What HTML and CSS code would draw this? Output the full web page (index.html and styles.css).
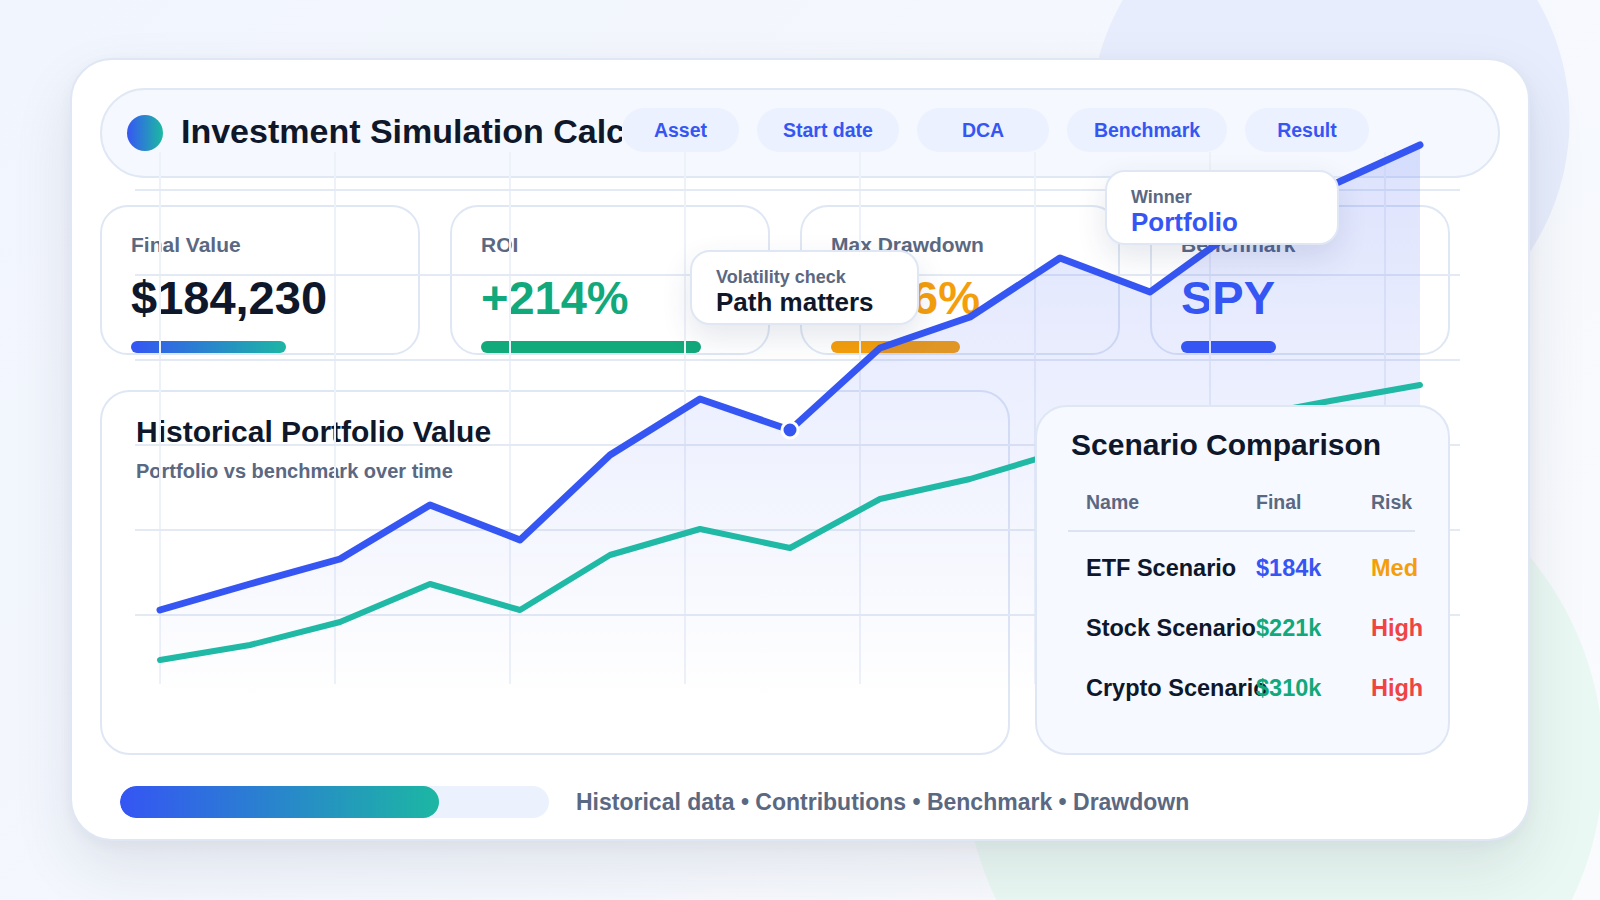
FILE: index.html
```html
<!DOCTYPE html>
<html lang="en">
<head>
<meta charset="utf-8">
<title>Investment Simulation Calculator</title>
<link rel="stylesheet" href="styles.css">
</head>
<body>
<main class="app">
  <header class="topbar">
    <span class="logo"></span>
    <h1 class="brand">Investment Simulation Calculator</h1>
    <nav class="steps">
      <span class="step">Asset</span>
      <span class="step">Start date</span>
      <span class="step">DCA</span>
      <span class="step">Benchmark</span>
      <span class="step">Result</span>
    </nav>
  </header>

  <section class="stats">
    <article class="stat">
      <div class="stat-label">Final Value</div>
      <div class="stat-value">$184,230</div>
      <div class="stat-bar bar-gradient" style="width:155px"></div>
    </article>
    <article class="stat">
      <div class="stat-label">ROI</div>
      <div class="stat-value tone-green">+214%</div>
      <div class="stat-bar bar-green" style="width:220px"></div>
    </article>
    <article class="stat">
      <div class="stat-label">Max Drawdown</div>
      <div class="stat-value tone-orange">-18.6%</div>
      <div class="stat-bar bar-orange" style="width:129px"></div>
    </article>
    <article class="stat">
      <div class="stat-label">Benchmark</div>
      <div class="stat-value tone-blue">SPY</div>
      <div class="stat-bar bar-blue" style="width:95px"></div>
    </article>
  </section>

  <section class="panels">
    <div class="panel chart-panel">
      <h2 class="panel-title">Historical Portfolio Value</h2>
      <p class="panel-sub">Portfolio vs benchmark over time</p>
    </div>
    <div class="panel scenario-panel">
      <h2 class="panel-title">Scenario Comparison</h2>
      <div class="table">
        <div class="trow thead">
          <span>Name</span><span>Final</span><span>Risk</span>
        </div>
        <div class="trow">
          <span class="name">ETF Scenario</span><span class="tone-blue">$184k</span><span class="tone-orange">Med</span>
        </div>
        <div class="trow">
          <span class="name">Stock Scenario</span><span class="tone-green">$221k</span><span class="tone-red">High</span>
        </div>
        <div class="trow">
          <span class="name">Crypto Scenario</span><span class="tone-green">$310k</span><span class="tone-red">High</span>
        </div>
      </div>
    </div>
  </section>

  <footer class="footer">
    <div class="progress"><div class="progress-fill" style="width:74.4%"></div></div>
    <span class="legend">Historical data • Contributions • Benchmark • Drawdown</span>
  </footer>

  <!-- value chart drawn across the whole dashboard, in page coordinates -->
  <svg class="plot" viewBox="70 58 1460 783" width="1460" height="783" aria-hidden="true">
    <defs>
      <linearGradient id="areaFade" x1="0" y1="145" x2="0" y2="700" gradientUnits="userSpaceOnUse">
        <stop offset="0" stop-color="#3656f4" stop-opacity="0.17"/>
        <stop offset="1" stop-color="#3656f4" stop-opacity="0"/>
      </linearGradient>
    </defs>
    <g class="grid-v">
      <line x1="160" y1="152" x2="160" y2="684"/>
      <line x1="335" y1="152" x2="335" y2="684"/>
      <line x1="510" y1="152" x2="510" y2="684"/>
      <line x1="685" y1="152" x2="685" y2="684"/>
      <line x1="860" y1="152" x2="860" y2="684"/>
      <line x1="1035" y1="152" x2="1035" y2="684"/>
      <line x1="1210" y1="152" x2="1210" y2="684"/>
      <line x1="1385" y1="152" x2="1385" y2="684"/>
    </g>
    <g class="grid-h">
      <line x1="135" y1="190" x2="1460" y2="190"/>
      <line x1="135" y1="275" x2="1460" y2="275"/>
      <line x1="135" y1="360" x2="1460" y2="360"/>
      <line x1="135" y1="445" x2="1460" y2="445"/>
      <line x1="135" y1="530" x2="1460" y2="530"/>
      <line x1="135" y1="615" x2="1460" y2="615"/>
    </g>
    <polygon fill="url(#areaFade)" points="160,610 250,584 340,559 430,505 520,540 610,455 700,399 790,430 880,348 970,317 1060,258 1150,292 1240,227 1330,186 1420,145 1420,700 160,700"/>
    <polyline class="line-bench" points="160,660 250,645 340,622 430,584 520,610 610,555 700,529 790,548 880,499 970,479 1060,452 1150,432 1240,418 1330,401 1420,385"/>
    <polyline class="line-port" points="160,610 250,584 340,559 430,505 520,540 610,455 700,399 790,430 880,348 970,317 1060,258 1150,292 1240,227 1330,186 1420,145"/>
    <circle class="marker" cx="790" cy="430" r="8"/>
  </svg>

  <div class="callout callout-volatility">
    <div class="callout-label">Volatility check</div>
    <div class="callout-value">Path matters</div>
  </div>
  <div class="callout callout-winner">
    <div class="callout-label">Winner</div>
    <div class="callout-value tone-blue">Portfolio</div>
  </div>
</main>
</body>
</html>
```

FILE: styles.css
```css
* {
  box-sizing: border-box;
}

html,
body {
  margin: 0;
  height: 100%;
}

body {
  overflow: hidden;
  font-family: "Liberation Sans", Arial, sans-serif;
  color: #0f172a;
  background:
    radial-gradient(circle 240px at 1330px 120px, #e7edfc 239px, rgba(231, 237, 252, 0) 240px),
    radial-gradient(circle 320px at 1284px 761px, #eaf8f3 319px, rgba(234, 248, 243, 0) 320px),
    linear-gradient(135deg, #f1f5fd 0%, #f5f8fd 55%, #fafbfd 100%);
}

/* main dashboard card */
.app {
  position: relative;
  width: 1460px;
  height: 783px;
  margin: 58px auto 0;
  padding: 28px 28px 0;
  background: #ffffff;
  border: 2px solid #dfe7f4;
  border-radius: 42px;
  box-shadow: 0 26px 60px rgba(30, 41, 70, 0.10), 0 4px 14px rgba(30, 41, 70, 0.04);
}

/* top bar */
.topbar {
  display: flex;
  align-items: center;
  height: 90px;
  padding-left: 25px;
  background: #f5f8fe;
  border: 2px solid #e0e8f5;
  border-radius: 45px;
}

.logo {
  flex: 0 0 36px;
  width: 36px;
  height: 36px;
  border-radius: 50%;
  background: linear-gradient(90deg, #3656f4, #1cb9a2);
}

.brand {
  flex: 0 0 441px;
  margin: 0 0 4px 18px;
  overflow: hidden;
  white-space: nowrap;
  font-size: 34px;
  line-height: 40px;
  font-weight: 700;
  color: #0f172a;
}

.steps {
  display: grid;
  grid-template-columns: 117px 142px 132px 160px 124px;
  gap: 18px;
  margin-top: -6px;
}

.step {
  display: flex;
  align-items: center;
  justify-content: center;
  height: 44px;
  border-radius: 22px;
  background: #ebf1fe;
  color: #3656f4;
  font-size: 19.5px;
  font-weight: 700;
  white-space: nowrap;
}

/* metric cards */
.stats {
  display: grid;
  grid-template-columns: 320px 320px 320px 300px;
  gap: 30px;
  margin-top: 27px;
}

.stat {
  display: flex;
  flex-direction: column;
  align-items: flex-start;
  height: 150px;
  padding: 25px 29px 0;
  background: #ffffff;
  border: 2px solid #dfe7f4;
  border-radius: 28px;
}

.stat-label {
  font-size: 21px;
  line-height: 25px;
  font-weight: 700;
  color: #5b6881;
  white-space: nowrap;
}

.stat-value {
  margin-top: 14px;
  font-size: 47px;
  line-height: 54px;
  font-weight: 700;
  color: #0f172a;
  white-space: nowrap;
}

.stat-bar {
  margin-top: auto;
  height: 12px;
  border-radius: 6px;
}

.bar-gradient {
  background: linear-gradient(90deg, #3555f4, #1cb6a4);
}

.bar-green {
  background: #12a97b;
}

.bar-orange {
  background: #f59e0b;
}

.bar-blue {
  background: #3656f4;
}

.tone-green {
  color: #11a97b;
}

.tone-orange {
  color: #f59e0b;
}

.tone-blue {
  color: #3656f4;
}

.tone-red {
  color: #ef4444;
}

/* lower panels */
.panels {
  display: flex;
  align-items: flex-end;
  gap: 25px;
  margin-top: 35px;
}

.panel {
  border: 2px solid #dfe7f4;
  border-radius: 30px;
}

.panel-title {
  margin: 0;
  font-size: 30px;
  line-height: 36px;
  font-weight: 700;
  color: #0f172a;
  white-space: nowrap;
}

.chart-panel {
  width: 910px;
  height: 365px;
  padding: 22px 34px;
  background: #ffffff;
}

.panel-sub {
  margin: 9px 0 0;
  font-size: 20px;
  line-height: 24px;
  font-weight: 700;
  color: #5b6881;
}

.scenario-panel {
  position: relative;
  z-index: 2;
  width: 415px;
  height: 350px;
  padding: 20px 34px;
  background: #f6f9ff;
  border-radius: 32px;
}

.table {
  width: 347px;
  margin: 27px 0 0 -3px;
}

.trow {
  display: grid;
  grid-template-columns: 170px 115px auto;
  padding-left: 18px;
  font-size: 23.5px;
  line-height: 28px;
  font-weight: 700;
  white-space: nowrap;
  margin-bottom: 32px;
}

.trow:last-child {
  margin-bottom: 0;
}

.trow.thead {
  font-size: 19.5px;
  line-height: 24px;
  color: #5b6881;
  padding-bottom: 16px;
  border-bottom: 2px solid #dce4f2;
  margin-bottom: 22px;
}

.trow .name {
  color: #0f172a;
}

/* footer */
.footer {
  display: flex;
  align-items: center;
  gap: 27px;
  margin-top: 31px;
  padding-left: 20px;
}

.progress {
  width: 429px;
  height: 32px;
  border-radius: 16px;
  background: #ecf2fd;
  overflow: hidden;
}

.progress-fill {
  height: 100%;
  border-radius: 16px;
  background: linear-gradient(90deg, #3555f4, #1cb7a3);
}

.legend {
  font-size: 23px;
  line-height: 28px;
  font-weight: 700;
  color: #5b6881;
  white-space: nowrap;
}

/* chart overlay */
.plot {
  position: absolute;
  left: -2px;
  top: -2px;
  z-index: 1;
  pointer-events: none;
}

.grid-v line {
  stroke: #edf1f8;
  stroke-width: 2;
}

.grid-h line {
  stroke: #e4eaf4;
  stroke-width: 2;
}

.line-port {
  fill: none;
  stroke: #3656f4;
  stroke-width: 7;
  stroke-linecap: round;
  stroke-linejoin: round;
}

.line-bench {
  fill: none;
  stroke: #1fb9a5;
  stroke-width: 6;
  stroke-linecap: round;
  stroke-linejoin: round;
}

.marker {
  fill: #3656f4;
  stroke: #ffffff;
  stroke-width: 3;
}

/* floating callouts */
.callout {
  position: absolute;
  z-index: 3;
  height: 75px;
  padding: 15px 24px 8px;
  background: #ffffff;
  border: 2px solid #e0e7f4;
  border-radius: 20px;
  box-shadow: 0 12px 30px rgba(40, 60, 110, 0.12);
}

.callout-volatility {
  left: 618px;
  top: 190px;
  width: 229px;
}

.callout-winner {
  left: 1033px;
  top: 110px;
  width: 234px;
}

.callout-label {
  font-size: 18px;
  line-height: 20px;
  font-weight: 700;
  color: #5b6881;
  white-space: nowrap;
}

.callout-value {
  font-size: 26px;
  line-height: 30px;
  font-weight: 700;
  color: #0f172a;
  white-space: nowrap;
}

.callout-value.tone-blue {
  color: #3656f4;
}
```
